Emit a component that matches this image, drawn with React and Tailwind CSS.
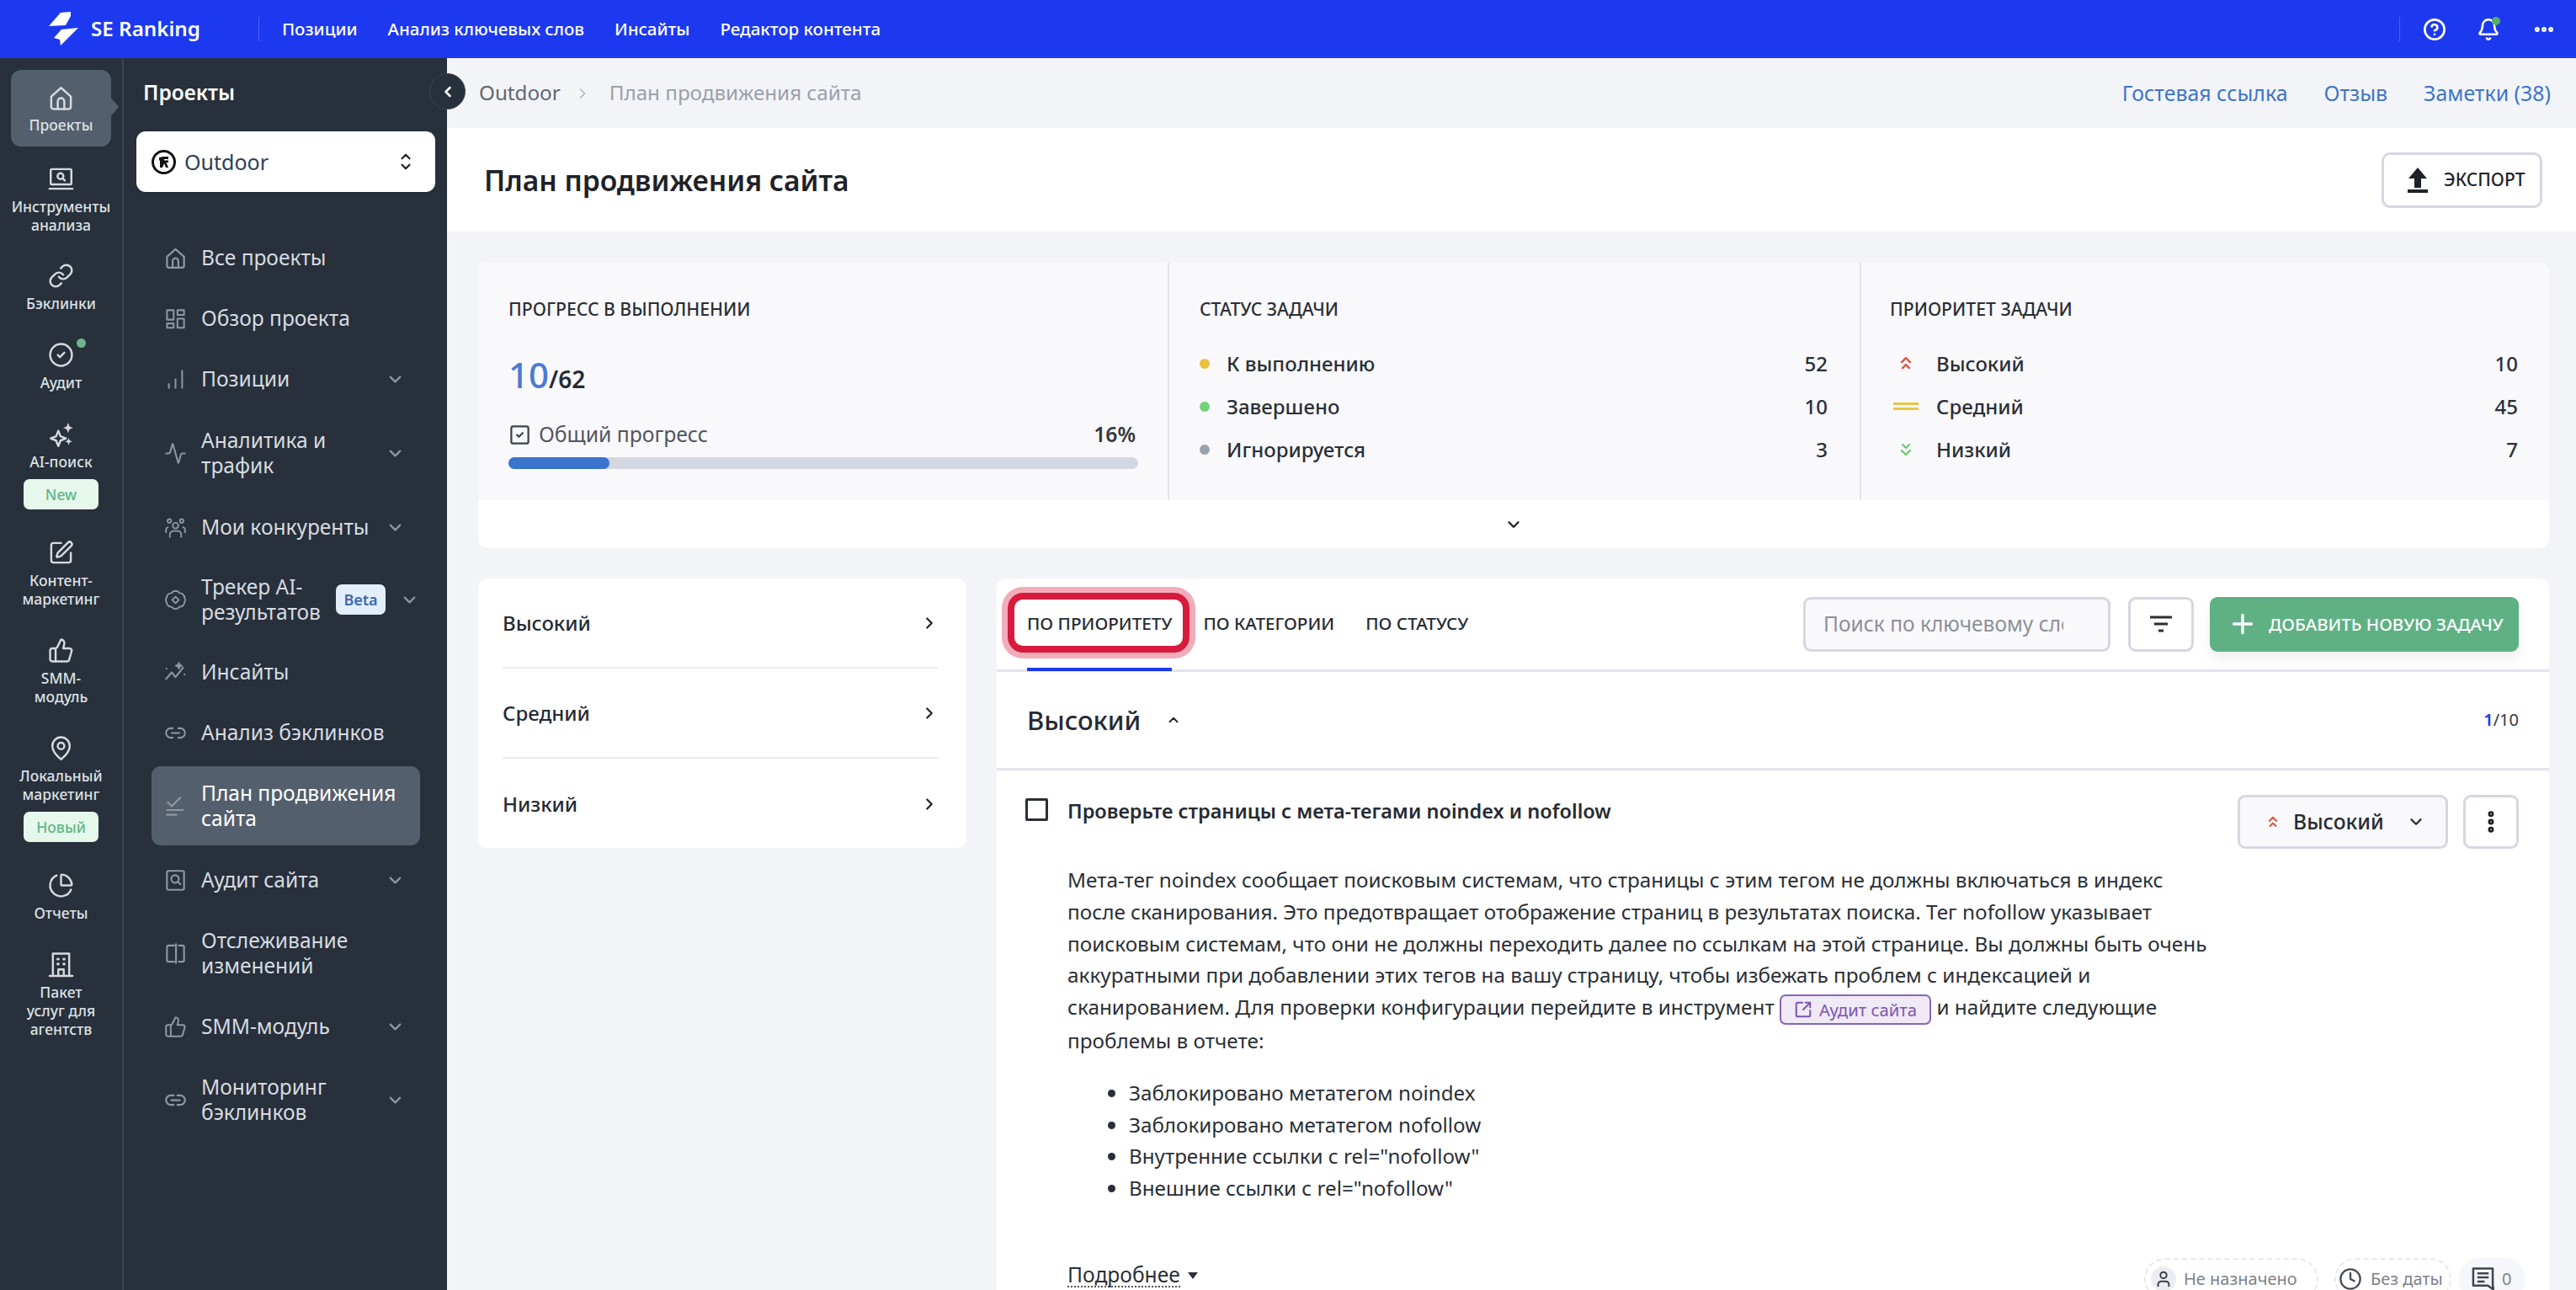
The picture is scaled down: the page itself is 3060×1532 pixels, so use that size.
import React from "react";
import {
  ChevronDown, ChevronRight, ChevronLeft, ChevronUp, Plus, SquareCheck,
  Link as LinkIcon, CircleCheck, SquarePen, ThumbsUp, MapPin, ChartPie, Activity, Link2, CircleHelp, Bell, Ellipsis, Clock, EllipsisVertical, SquareArrowOutUpRight, User,
} from "lucide-react";

const Svg = ({ size = 30, className = "", sw = 2, children }) => (
  <svg width={size} height={size} viewBox="0 0 24 24" fill="none" stroke="currentColor" strokeWidth={sw} strokeLinecap="round" strokeLinejoin="round" className={className}>
    {children}
  </svg>
);

const HomeI = (p) => (
  <Svg {...p}>
    <path d="M3 10.5 12 2.5l9 8V20a2 2 0 0 1-2 2H5a2 2 0 0 1-2-2Z" />
    <path d="M9 22v-7a3 3 0 0 1 6 0v7" />
  </Svg>
);
const LaptopI = (p) => (
  <Svg {...p}>
    <rect x="2.500" y="3" width="19" height="14" rx="1" />
    <path d="M1.500 21h21" />
    <circle cx="11.500" cy="9.500" r="2.700" />
    <path d="m13.500 11.500 2 2" />
  </Svg>
);
const SparkI = (p) => (
  <Svg {...p}>
    <path d="M9.500 9 11.500 14 16.500 16 11.500 18 9.500 23 7.500 18 2.500 16 7.500 14Z" />
    <path d="M18.500 1.500 19.800 5l3.200 1.300-3.200 1.300-1.300 3.400-1.300-3.400L14 6.300 17.200 5Z" fill="currentColor" stroke="none" />
    <path d="M19 15.500l.9 2.400 2.400.9-2.400.9-.9 2.400-.9-2.400-2.400-.9 2.400-.9Z" fill="currentColor" stroke="none" />
  </Svg>
);
const BuildingI = (p) => (
  <Svg {...p}>
    <path d="M1.500 22.500h21" />
    <path d="M4.500 22.500V2h15v20.500" />
    <path d="M9.500 22.500v-6h5v6" />
    <path d="M9 7h.5M14.500 7h.5M9 11.500h.5M14.500 11.500h.5" strokeWidth="2.400" />
  </Svg>
);
const GridI = (p) => (
  <Svg {...p} sw={1.8}>
    <rect x="3" y="3" width="7" height="10" />
    <rect x="14" y="3" width="7" height="5" />
    <rect x="3" y="17" width="7" height="4.500" />
    <rect x="14" y="12" width="7" height="9.500" />
  </Svg>
);
const BarsI = (p) => (
  <Svg {...p} sw={1.8}>
    <path d="M5 21v-4M12 21v-9M19 21V3" />
  </Svg>
);
const PeopleI = (p) => (
  <Svg {...p} sw={1.7}>
    <circle cx="12" cy="10" r="3" />
    <circle cx="5.500" cy="5" r="1.900" />
    <circle cx="18.500" cy="5" r="1.900" />
    <path d="M6 22v-2.500a4 4 0 0 1 4-4h4a4 4 0 0 1 4 4V22" />
    <path d="M2 17v-2.500a3 3 0 0 1 2-2.800M22 17v-2.500a3 3 0 0 0-2-2.800" />
  </Svg>
);
const TrackerI = (p) => (
  <Svg {...p} sw={1.7}>
    <path d="M12 2.500a5 5 0 0 1 4.200 2.300 5 5 0 0 1 5.300 5.300 2.500 2.500 0 0 1 0 3.800 5 5 0 0 1-5.300 5.300 5 5 0 0 1-8.400 0 5 5 0 0 1-5.300-5.300 2.500 2.500 0 0 1 0-3.800 5 5 0 0 1 5.300-5.300A5 5 0 0 1 12 2.500Z" />
    <path d="m12 8.500 3.500 3.500-3.500 3.500L8.500 12Z" />
  </Svg>
);
const InsightI = (p) => (
  <Svg {...p} sw={1.9}>
    <path d="M2 19l6-7 4 5 8-10" />
    <path d="M15.500 2l.7 2.300 2.300.7-2.300.7-.7 2.300-.7-2.300-2.300-.7 2.300-.7Z" fill="currentColor" />
    <path d="M2.500 8v.2M21.500 14v.2" />
  </Svg>
);
const PlanI = (p) => (
  <Svg {...p} sw={1.9}>
    <path d="M4 8l4 4 9-9" />
    <path d="M3 16h17M3 21h10" />
  </Svg>
);
const AuditI = (p) => (
  <Svg {...p} sw={1.9}>
    <rect x="3" y="2" width="18" height="20" rx="1.500" />
    <circle cx="11.500" cy="10.500" r="4" />
    <path d="m14.500 13.500 2.500 2.500" />
  </Svg>
);
const SplitI = (p) => (
  <Svg {...p} sw={1.9}>
    <path d="M10.500 3.500H4.500a1.500 1.500 0 0 0-1.500 1.500v14a1.500 1.500 0 0 0 1.500 1.500h6" />
    <path d="M15.500 3.500h4a1.500 1.500 0 0 1 1.500 1.500v14a1.500 1.500 0 0 1-1.500 1.500h-4" />
    <path d="M12.500 2v20" />
  </Svg>
);
const ChainI = (p) => (
  <Svg {...p} sw={2}>
    <path d="M10 7H7a5 5 0 0 0 0 10h3M14 7h3a5 5 0 0 1 0 10h-3" />
    <path d="M7.500 12h9" />
  </Svg>
);
const ExportI = ({ className }) => (
  <svg width="26" height="30" viewBox="0 0 26 30" className={className} fill="currentColor">
    <path d="M13 0 24 13H17V24H9V13H2Z" />
    <rect x="1" y="26" width="24" height="4" />
  </svg>
);
const Hi = ({ className = "text-[#DB5543]", size = 14 }) => (
  <svg width={size} height={size * 1.3} viewBox="0 0 14 18" fill="none" stroke="currentColor" strokeWidth="2.400" strokeLinecap="round" strokeLinejoin="round" className={className}>
    <path d="M2 8l5-5 5 5M3 15l4-4 4 4" />
  </svg>
);
const Lo = () => (
  <svg width="14" height="18" viewBox="0 0 14 18" fill="none" stroke="currentColor" strokeWidth="2.400" strokeLinecap="round" strokeLinejoin="round" className="text-[#6FCB74]">
    <path d="M3 3l4 4 4-4M2 10l5 5 5-5" />
  </svg>
);
const Mid = () => (
  <div className="flex w-[30px] flex-col gap-[3px]">
    <div className="h-[3px] bg-[#EBC545]" />
    <div className="h-[3px] bg-[#EBC545]" />
  </div>
);
const Logo = () => (
  <svg width="38" height="44" viewBox="0 0 38 44" fill="#fff">
    <path d="M15 2 27 1 27 6 21 17 1 18Z" />
    <path d="M36 20 15 41 14 34 7 32 16 22Z" />
  </svg>
);

const rail = [
  { t: ["Проекты"], I: HomeI, active: true, mt: "mt-[14px]" },
  { t: ["Инструменты", "анализа"], I: LaptopI, mt: "mt-[23px]" },
  { t: ["Бэклинки"], I: (p) => <LinkIcon {...p} />, mt: "mt-[34px]" },
  { t: ["Аудит"], I: (p) => <CircleCheck {...p} />, mt: "mt-[35px]", dot: true },
  { t: ["AI-поиск"], I: SparkI, mt: "mt-[35px]", pill: "New" },
  { t: ["Контент-", "маркетинг"], I: (p) => <SquarePen {...p} />, mt: "mt-[36px]" },
  { t: ["SMM-", "модуль"], I: (p) => <ThumbsUp {...p} />, mt: "mt-[35px]" },
  { t: ["Локальный", "маркетинг"], I: (p) => <MapPin {...p} />, mt: "mt-[35px]", pill: "Новый" },
  { t: ["Отчеты"], I: (p) => <ChartPie {...p} />, mt: "mt-[36px]" },
  { t: ["Пакет", "услуг для", "агентств"], I: BuildingI, mt: "mt-[35px]" },
];

const menu = [
  { t: ["Все проекты"], I: HomeI, h: "h-[72px]" },
  { t: ["Обзор проекта"], I: GridI, h: "h-[72px]" },
  { t: ["Позиции"], I: BarsI, h: "h-[72px]", c: true },
  { t: ["Аналитика и", "трафик"], I: Activity, h: "h-[104px]", c: true },
  { t: ["Мои конкуренты"], I: PeopleI, h: "h-[72px]", c: true },
  { t: ["Трекер AI-", "результатов"], I: TrackerI, h: "h-[100px]", c: true, beta: true },
  { t: ["Инсайты"], I: InsightI, h: "h-[72px]" },
  { t: ["Анализ бэклинков"], I: Link2, h: "h-[72px]" },
  { t: ["План продвижения", "сайта"], I: PlanI, h: "mt-[4px] mb-[5px] h-[94px] rounded-[11px] bg-[#535F6C] text-white", active: true },
  { t: ["Аудит сайта"], I: AuditI, h: "h-[72px]", c: true },
  { t: ["Отслеживание", "изменений"], I: SplitI, h: "h-[102px]" },
  { t: ["SMM-модуль"], I: (p) => <ThumbsUp {...p} />, h: "h-[72px]", c: true },
  { t: ["Мониторинг", "бэклинков"], I: ChainI, h: "h-[102px]", c: true },
];

function Rail() {
  return (
    <div className="flex h-full w-[147px] shrink-0 flex-col items-center border-r-2 border-[#3A444F] bg-[#27303B] text-[#DDE0E4]">
      {rail.map((r) => (
        <div key={r.t[0]} className={`${r.mt} relative flex w-[119px] flex-col items-center`}>
          {r.active && <div className="absolute right-[-9px] top-[32px] size-0 border-y-[12px] border-l-[10px] border-y-transparent border-l-[#535F6C]" />}
          <div className={`flex w-full flex-col items-center ${r.active ? "h-[91px] rounded-[12px] bg-[#535F6C] pt-[18px]" : ""}`}>
            <r.I size={31} strokeWidth={1.9} sw={1.9} className="shrink-0 text-[#D6D9DE]" />
            <div className={`${r.active ? "mt-[5px]" : "mt-[6px]"} text-center text-[17.500px] font-medium leading-[22px]`}>
              {r.t.map((l) => <div key={l} className="whitespace-nowrap">{l}</div>)}
            </div>
          </div>
          {r.dot && <div className="absolute left-[78px] top-[-4px] size-[11px] rounded-full bg-[#6FB58A]" />}
          {r.pill && (
            <div className="mt-[10px] flex h-[36px] w-[89px] items-center justify-center rounded-[7px] bg-[#E6F8EC] text-[17.500px] font-medium text-[#60B688]">
              {r.pill}
            </div>
          )}
        </div>
      ))}
    </div>
  );
}

function SubNav() {
  return (
    <div className="relative flex h-full w-[384px] shrink-0 flex-col bg-[#27303B] pl-[15px] text-[#D7DBE0]">
      <div className="mt-[25px] pl-[8px] text-[24.500px] font-semibold leading-[32px] text-white">Проекты</div>
      <div className="mt-[30px] flex h-[72px] w-[355px] items-center rounded-[11px] bg-white pl-[18px] pr-[26px] text-[#2F3E56] shadow-[0_1px_2px_#0003]">
        <div className="flex size-[29px] items-center justify-center rounded-full border-[3px] border-[#111]">
          <svg width="15" height="15" viewBox="0 0 15 15" fill="#111"><path d="M2 2 7 1h6v3H8v1.500h5V8H10.500L13 14h-3L8 9 6 14H3V6L2 5Z" /></svg>
        </div>
        <span className="ml-[10px] text-[25px] leading-none">Outdoor</span>
        <div className="ml-auto flex flex-col items-center text-[#222]">
          <ChevronUp size={18} strokeWidth={3} className="-mb-[3px]" />
          <ChevronDown size={18} strokeWidth={3} className="-mt-[3px]" />
        </div>
      </div>
      <div className="ml-[18px] mt-[42px] flex w-[319px] flex-col">
        {menu.map((m) => (
          <div key={m.t[0]} className={`flex ${m.h} items-center pl-[16px]`}>
            <m.I size={27} strokeWidth={1.8} className="-ml-[1px] shrink-0 text-[#8F969F]" />
            <div className="ml-[17px] flex-1 whitespace-nowrap text-[24.500px] leading-[30px]">
              {m.t.map((l) => <div key={l}>{l}</div>)}
            </div>
            {m.beta && <div className="flex h-[36px] w-[59px] items-center justify-center rounded-[7px] bg-[#E3EEFB] text-[18px] font-semibold text-[#3A68B0]">Beta</div>}
            {m.c && <ChevronDown size={23} strokeWidth={2.400} className={`${m.beta ? "ml-[17px] mr-[1px]" : "mr-[18px]"} text-[#8F969F]`} />}
          </div>
        ))}
      </div>
      <button className="absolute right-[-22px] top-[18px] flex size-[43px] items-center justify-center rounded-full border border-[#3A444F] bg-[#27303B] text-white">
        <ChevronLeft size={20} strokeWidth={3} />
      </button>
    </div>
  );
}

function Top() {
  const nav = ["Позиции", "Анализ ключевых слов", "Инсайты", "Редактор контента"];
  return (
    <div className="flex h-[69px] shrink-0 items-center bg-[#1D39F0] pl-[57px] pr-[24px] text-white">
      <Logo />
      <span className="ml-[13px] text-[24.200px] font-semibold leading-none">SE Ranking</span>
      <div className="ml-[69px] h-[29px] w-[1px] bg-[#4C63F3]" />
      <div className="ml-[27px] flex gap-[36px] text-[20.500px] font-medium">
        {nav.map((n) => <span key={n}>{n}</span>)}
      </div>
      <div className="ml-auto flex items-center">
        <div className="h-[29px] w-[1px] bg-[#4C63F3]" />
        <CircleHelp size={28} strokeWidth={2.300} className="ml-[27px]" />
        <div className="relative ml-[36px]">
          <Bell size={28} strokeWidth={2.200} />
          <div className="absolute right-0 top-[-1px] size-[10px] rounded-full bg-[#57AE6B]" />
        </div>
        <Ellipsis size={28} strokeWidth={3} className="ml-[38px]" />
      </div>
    </div>
  );
}

const Row = ({ icon, label, n }) => (
  <div className="flex h-[51px] items-center text-[24px] font-medium text-[#2A2F37]">
    {icon}
    <span>{label}</span>
    <span className="ml-auto">{n}</span>
  </div>
);
const Dot = ({ c }) => <div className={`mr-[20px] size-[12px] rounded-full ${c}`} />;
const PIcon = ({ children }) => <div className="mr-[17px] flex w-[38px] justify-center">{children}</div>;

function Stats() {
  return (
    <div className="ml-[37px] mt-[37px] w-[2460px] shrink-0 overflow-hidden rounded-[11px] bg-white">
      <div className="grid h-[282px] grid-cols-[821px_822px_1fr] bg-[#F9F9FC]">
        <div className="border-r-2 border-[#E3E4EC] pl-[36px] pr-[35px] pt-[41px]">
          <div className="text-[21.200px] font-medium leading-[28px] text-[#2A2F37]">ПРОГРЕСС В ВЫПОЛНЕНИИ</div>
          <div className="mt-[42px] flex items-baseline leading-[44px]">
            <span className="text-[42px] font-medium text-[#4A7BD4]">10</span>
            <span className="text-[28px] font-semibold text-[#262B33]">/62</span>
          </div>
          <div className="mt-[28px] flex items-center text-[24.700px] leading-[32px] text-[#50565F]">
            <SquareCheck size={27} strokeWidth={2} className="text-[#3B424B]" />
            <span className="ml-[9px]">Общий прогресс</span>
            <span className="ml-auto mr-[3px] font-semibold text-[#33383F]">16%</span>
          </div>
          <div className="mt-[11px] h-[14px] rounded-full bg-[#D4D7E2]">
            <div className="h-full rounded-full bg-[#3A74CC]" style={{ width: "16%" }} />
          </div>
        </div>
        <div className="border-r-2 border-[#E3E4EC] pl-[36px] pr-[38px] pt-[41px]">
          <div className="text-[21.200px] font-medium leading-[28px] text-[#2A2F37]">СТАТУС ЗАДАЧИ</div>
          <div className="mt-[25px]">
            <Row icon={<Dot c="bg-[#EBC03F]" />} label="К выполнению" n="52" />
            <Row icon={<Dot c="bg-[#74D07A]" />} label="Завершено" n="10" />
            <Row icon={<Dot c="bg-[#98A2AE]" />} label="Игнорируется" n="3" />
          </div>
        </div>
        <div className="pl-[34px] pr-[37px] pt-[41px]">
          <div className="text-[21.200px] font-medium leading-[28px] text-[#2A2F37]">ПРИОРИТЕТ ЗАДАЧИ</div>
          <div className="mt-[25px]">
            <Row icon={<PIcon><Hi /></PIcon>} label="Высокий" n="10" />
            <Row icon={<PIcon><Mid /></PIcon>} label="Средний" n="45" />
            <Row icon={<PIcon><Lo /></PIcon>} label="Низкий" n="7" />
          </div>
        </div>
      </div>
      <div className="flex h-[57px] items-center justify-center text-[#222]">
        <ChevronDown size={22} strokeWidth={2.600} />
      </div>
    </div>
  );
}

function LeftPanel() {
  return (
    <div className="h-[320px] w-[580px] shrink-0 rounded-[11px] bg-white pl-[29px] pr-[33px]">
      {["Высокий", "Средний", "Низкий"].map((t, i) => (
        <div key={t} className={`flex h-[107px] items-center justify-between text-[24px] font-medium text-[#262B33] ${i < 2 ? "border-b-2 border-[#ECEDF2]" : ""}`}>
          {t}
          <ChevronRight size={22} strokeWidth={2.400} className="text-[#222]" />
        </div>
      ))}
    </div>
  );
}

function Tabs() {
  const cls = "text-[20.700px] font-medium text-[#262B33]";
  return (
    <div className="flex h-[111px] shrink-0 items-center border-b-[3px] border-[#E3E4EC] px-[36px]">
      <div className={`relative flex h-[108px] items-center ${cls}`}>
        <div className="absolute bottom-[20px] left-[-23px] right-[-21px] top-[17px] rounded-[18px] border-[8px] border-[#D81B3C] shadow-[0_0_0_7px_#F2ACBA]" />
        <span className="relative">ПО ПРИОРИТЕТУ</span>
        <div className="absolute bottom-[-2px] left-0 right-0 h-[4px] bg-[#1D39F0]" />
      </div>
      <span className={`ml-[37px] ${cls}`}>ПО КАТЕГОРИИ</span>
      <span className={`ml-[37px] ${cls}`}>ПО СТАТУСУ</span>
      <div className="ml-auto flex h-[65px] w-[365px] items-center rounded-[9px] border-[3px] border-[#D5D8E3] bg-[#F9F9FC] pl-[21px]">
        <div className="w-[285px] overflow-hidden whitespace-nowrap text-[24.500px] text-[#8C9097]">Поиск по ключевому слову</div>
      </div>
      <div className="ml-[21px] flex h-[65px] w-[78px] items-center justify-center rounded-[9px] border-[3px] border-[#D5D8E3] bg-white text-[#2A2F37]">
        <svg width="30" height="24" viewBox="0 0 30 24" fill="none" stroke="currentColor" strokeWidth="3"><path d="M2 4h26M7 12h16M12 20h6" /></svg>
      </div>
      <div className="ml-[19px] flex h-[65px] w-[367px] items-center rounded-[9px] bg-[#5FB184] pl-[21px] text-[20.500px] font-medium text-white shadow-[0_10px_14px_#0000000f]">
        <Plus size={36} strokeWidth={2.200} />
        <span className="ml-[13px] whitespace-nowrap">ДОБАВИТЬ НОВУЮ ЗАДАЧУ</span>
      </div>
    </div>
  );
}

function Task() {
  return (
    <div className="relative pl-[84px] pr-[36px]">
      <div className="absolute left-[34px] top-[33px] size-[27px] rounded-[2px] border-[3px] border-[#2A2F37]" />
      <div className="flex items-start">
        <div className="mt-[31px] flex-1 text-[23.500px] font-semibold leading-[34px] text-[#262B33]">Проверьте страницы с мета-тегами noindex и nofollow</div>
        <div className="mt-[29px] flex h-[64px] w-[250px] items-center rounded-[9px] border-[3px] border-[#D5D8E3] bg-[#F9F9FC] pl-[33px] text-[24.700px] font-medium text-[#262B33]">
          <Hi size={12} />
          <span className="ml-[18px]">Высокий</span>
          <ChevronDown size={22} strokeWidth={2.600} className="ml-auto mr-[24px]" />
        </div>
        <div className="ml-[18px] mt-[29px] flex h-[64px] w-[66px] items-center justify-center rounded-[9px] border-[3px] border-[#D5D8E3] bg-white text-[#1E2228]">
          <EllipsisVertical size={32} strokeWidth={3.200} />
        </div>
      </div>
      <div className="mt-[18px] w-[1360px] text-[24.300px] leading-[37.800px] text-[#2A2F37]">
        Мета-тег noindex сообщает поисковым системам, что страницы с этим тегом не должны включаться в индекс после сканирования. Это предотвращает отображение страниц в результатах поиска. Тег nofollow указывает поисковым системам, что они не должны переходить далее по ссылкам на этой странице. Вы должны быть очень аккуратными при добавлении этих тегов на вашу страницу, чтобы избежать проблем с индексацией и сканированием. Для проверки конфигурации перейдите в инструмент{" "}
        <span className="inline-flex h-[36px] items-center gap-[8px] rounded-[7px] border-2 border-[#8A63BB] bg-[#F0E9F6] px-[15px] align-middle text-[20.300px] leading-none text-[#7C55B0]">
          <SquareArrowOutUpRight size={22} strokeWidth={2.200} />
          Аудит сайта
        </span>{" "}
        и найдите следующие проблемы в отчете:
      </div>
      <ul className="ml-[72px] mt-[25px] list-disc text-[24.200px] leading-[37.500px] text-[#2A2F37] marker:text-[#2A2F37]">
        <li className="pl-[1px]">Заблокировано метатегом noindex</li>
        <li className="pl-[1px]">Заблокировано метатегом nofollow</li>
        <li className="pl-[1px]">Внутренние ссылки с rel="nofollow"</li>
        <li className="pl-[1px]">Внешние ссылки с rel="nofollow"</li>
      </ul>
      <div className="mt-[65px] flex items-start">
        <div className="mt-[7px] flex items-center">
          <span className="border-b-2 border-dotted border-[#555] text-[24.600px] leading-[26px] text-[#2A2F37]">Подробнее</span>
          <svg width="12" height="8" viewBox="0 0 12 8" className="ml-[9px] text-[#2A2F37]" fill="currentColor"><path d="M0 0h12L6 8Z" /></svg>
        </div>
        <div className="-mr-[8px] ml-auto flex items-start">
          <div className="flex h-[50px] w-[207px] items-center gap-[9px] rounded-[25px] border-2 border-dashed border-[#E6E8EE] pl-[6px] text-[20px] whitespace-nowrap text-[#7D828A]">
            <div className="flex size-[30px] items-center justify-center rounded-full bg-[#ECEDF2] text-[#3A4049]">
              <User size={22} strokeWidth={2.200} />
            </div>
            Не назначено
          </div>
          <div className="ml-[19px] flex h-[50px] w-[139px] items-center gap-[10px] rounded-[25px] border-2 border-dashed border-[#E6E8EE] pl-[3px] text-[20px] whitespace-nowrap text-[#7D828A]">
            <Clock size={28} strokeWidth={2} className="text-[#454B54]" />
            Без даты
          </div>
          <div className="ml-[8px] flex h-[50px] w-[80px] items-center gap-[9px] rounded-[25px] bg-[#F6F7FA] pl-[16px] text-[20px] text-[#7D828A]">
            <svg width="27" height="30" viewBox="0 0 28 30" fill="none" stroke="#3F4650" strokeWidth="2.600" strokeLinejoin="round"><path d="M2 2h24v20l1 6-7-5H2Z" /><path d="M7 8h14M7 13h14M7 18h9" /></svg>
            0
          </div>
        </div>
      </div>
    </div>
  );
}

function Main() {
  return (
    <div className="flex min-w-0 flex-1 flex-col bg-[#F3F4F8]">
      <div className="flex h-[83px] shrink-0 items-center pl-[38px] pr-[30px] text-[24.200px]">
        <span className="text-[#5E6670]">Outdoor</span>
        <ChevronRight size={20} strokeWidth={1.600} className="ml-[16px] text-[#A9AEB6]" />
        <span className="ml-[22px] text-[#9AA0A8]">План продвижения сайта</span>
        <div className="ml-auto flex gap-[43px] text-[24.900px] text-[#3E74C9]">
          <span>Гостевая ссылка</span><span>Отзыв</span><span>Заметки (38)</span>
        </div>
      </div>
      <div className="flex h-[123px] shrink-0 items-center bg-white pl-[44px] pr-[40px]">
        <h1 className="mt-[1px] text-[33.600px] font-semibold text-[#1E2228]">План продвижения сайта</h1>
        <div className="ml-auto flex h-[66px] w-[191px] items-center rounded-[10px] border-[3px] border-[#D5D8E3] pl-[27px] text-[21px] font-medium text-[#1E2228]">
          <ExportI />
          <span className="ml-[18px]">ЭКСПОРТ</span>
        </div>
      </div>
      <Stats />
      <div className="ml-[37px] mt-[36px] flex min-h-0 flex-1 gap-[36px]">
        <LeftPanel />
        <div className="flex w-[1844px] flex-col overflow-hidden rounded-t-[11px] bg-white">
          <Tabs />
          <div className="flex h-[117px] shrink-0 items-center border-b-[3px] border-[#E3E4EC] px-[36px]">
            <span className="text-[31px] font-medium text-[#262B33]">Высокий</span>
            <ChevronUp size={18} strokeWidth={2.400} className="ml-[30px] text-[#222]" />
            <span className="ml-auto text-[20px] text-[#33383F]"><b className="font-semibold text-[#1D39F0]">1</b>/10</span>
          </div>
          <Task />
        </div>
      </div>
    </div>
  );
}

export default function App() {
  return (
    <div className="flex h-[1532px] w-[3060px] flex-col overflow-hidden bg-[#F3F4F8] font-['Noto_Sans',sans-serif]">
      <Top />
      <div className="flex min-h-0 flex-1">
        <Rail />
        <SubNav />
        <Main />
      </div>
    </div>
  );
}
